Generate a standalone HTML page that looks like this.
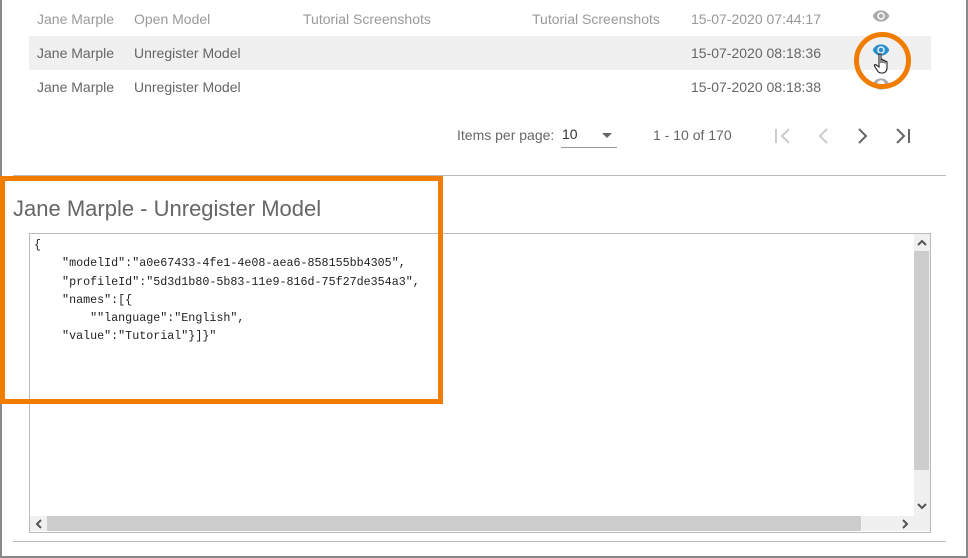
<!DOCTYPE html>
<html><head><style>
body{margin:0;width:968px;height:558px;position:relative;overflow:hidden;background:#fff;font-family:"Liberation Sans",Roboto,sans-serif;}
.a{position:absolute;white-space:nowrap}
.t{font-size:14px;color:#666}
.f{color:#999}
.mono{font-family:"Liberation Mono",monospace;font-size:11.7px;color:#222;line-height:18.3px}
</style></head><body>
<div class="a" style="left:0;top:0;width:2px;height:558px;background:#888"></div>
<div class="a" style="left:966px;top:0;width:2px;height:558px;background:#888"></div>
<div class="a" style="left:0;top:556px;width:968px;height:2px;background:#888"></div>

<div class="a" style="left:29px;top:36px;width:902px;height:34px;background:#f0f0f0"></div>
<div class="a t f" style="left:37px;top:11px">Jane Marple</div>
<div class="a t f" style="left:134px;top:11px">Open Model</div>
<div class="a t f" style="left:303px;top:11px">Tutorial Screenshots</div>
<div class="a t f" style="left:532px;top:11px">Tutorial Screenshots</div>
<div class="a t f" style="left:691px;top:11px">15-07-2020 07:44:17</div>
<div class="a t" style="left:37px;top:45px">Jane Marple</div>
<div class="a t" style="left:134px;top:45px">Unregister Model</div>
<div class="a t" style="left:691px;top:45px">15-07-2020 08:18:36</div>
<div class="a t" style="left:37px;top:79px">Jane Marple</div>
<div class="a t" style="left:134px;top:79px">Unregister Model</div>
<div class="a t" style="left:691px;top:79px">15-07-2020 08:18:38</div>

<svg class="a" style="left:870px;top:7px" width="22" height="18" viewBox="0 0 24 24"><path fill="#aaa" d="M12 4.5C7 4.5 2.7 7.6 1 12c1.7 4.4 6 7.5 11 7.5s9.3-3.1 11-7.5C21.3 7.6 17 4.5 12 4.5zm0 12.5a5 5 0 1 1 0-10 5 5 0 0 1 0 10zm0-8a3 3 0 1 0 0 6 3 3 0 0 0 0-6z"/></svg>
<svg class="a" style="left:870px;top:41px" width="22" height="18" viewBox="0 0 24 24"><path fill="#2a8fcf" d="M12 4.5C7 4.5 2.7 7.6 1 12c1.7 4.4 6 7.5 11 7.5s9.3-3.1 11-7.5C21.3 7.6 17 4.5 12 4.5zm0 12.5a5 5 0 1 1 0-10 5 5 0 0 1 0 10zm0-8a3 3 0 1 0 0 6 3 3 0 0 0 0-6z"/></svg>
<svg class="a" style="left:870px;top:75px" width="22" height="18" viewBox="0 0 24 24"><path fill="#aaa" d="M12 4.5C7 4.5 2.7 7.6 1 12c1.7 4.4 6 7.5 11 7.5s9.3-3.1 11-7.5C21.3 7.6 17 4.5 12 4.5zm0 12.5a5 5 0 1 1 0-10 5 5 0 0 1 0 10z"/></svg>
<div class="a" style="left:854px;top:32px;width:47px;height:47px;border:5px solid #f07d00;border-radius:50%;background:transparent"></div>
<svg class="a" style="left:873px;top:52px" width="22" height="24" viewBox="0 0 22 24"><path d="M6 2.5c0-1 2-1 2 0V11V8c0-1 2-1 2 0v3V9c0-1 2-1 2 0v2.5V10c0-1 2-1 2 0v6c0 3-2 5-4.5 5H8c-2 0-3-1-4-3l-2.5-4c-.5-1 .8-2 1.6-1L6 15z" fill="#fff" stroke="#222" stroke-width="1.1"/></svg>

<div class="a" style="left:457px;top:127px;font-size:14px;color:#666">Items per page:</div>
<div class="a" style="left:562px;top:126px;font-size:14px;color:#333">10</div>
<div class="a" style="left:602px;top:133px;width:0;height:0;border-left:5px solid transparent;border-right:5px solid transparent;border-top:5px solid #666"></div>
<div class="a" style="left:561px;top:147px;width:56px;height:1px;background:#999"></div>
<div class="a" style="left:653px;top:127px;font-size:14px;color:#666">1 - 10 of 170</div>
<svg class="a" style="left:770px;top:125px" width="150" height="22" viewBox="0 0 150 22">
<g fill="none" stroke-width="2">
<path d="M6 4v14M19 4l-7 7 7 7" stroke="#ccc"/>
<path d="M57 4l-7 7 7 7" stroke="#ccc"/>
<path d="M89 4l7 7-7 7" stroke="#666"/>
<path d="M127 4l7 7-7 7M139 4v14" stroke="#666"/>
</g></svg>

<div class="a" style="left:13px;top:175px;width:933px;height:1px;background:#bbb"></div>
<div class="a" style="left:13px;top:196px;font-size:22px;color:#666">Jane Marple - Unregister Model</div>

<div class="a" style="left:29px;top:233px;width:900px;height:298px;border:1px solid #bbb;background:#fff"></div>
<div class="a mono" style="left:34px;top:236px">{<br>&nbsp;&nbsp;&nbsp;&nbsp;"modelId":"a0e67433-4fe1-4e08-aea6-858155bb4305",<br>&nbsp;&nbsp;&nbsp;&nbsp;"profileId":"5d3d1b80-5b83-11e9-816d-75f27de354a3",<br>&nbsp;&nbsp;&nbsp;&nbsp;"names":[{<br>&nbsp;&nbsp;&nbsp;&nbsp;&nbsp;&nbsp;&nbsp;&nbsp;""language":"English",<br>&nbsp;&nbsp;&nbsp;&nbsp;"value":"Tutorial"}]}"</div>
<div class="a" style="left:914px;top:234px;width:16px;height:282px;background:#f0f0f0"></div>
<div class="a" style="left:914px;top:251px;width:15px;height:219px;background:#cdcdcd"></div>
<svg class="a" style="left:917px;top:239px" width="10" height="8"><path d="M1 6l4-4 4 4" fill="none" stroke="#555" stroke-width="2"/></svg>
<svg class="a" style="left:917px;top:502px" width="10" height="8"><path d="M1 2l4 4 4-4" fill="none" stroke="#555" stroke-width="2"/></svg>
<div class="a" style="left:30px;top:516px;width:884px;height:15px;background:#f0f0f0"></div>
<div class="a" style="left:47px;top:516px;width:814px;height:15px;background:#cdcdcd"></div>
<svg class="a" style="left:35px;top:519px" width="8" height="10"><path d="M6 1L2 5l4 4" fill="none" stroke="#555" stroke-width="2"/></svg>
<svg class="a" style="left:901px;top:519px" width="8" height="10"><path d="M2 1l4 4-4 4" fill="none" stroke="#555" stroke-width="2"/></svg>
<div class="a" style="left:914px;top:516px;width:16px;height:15px;background:#f0f0f0"></div>

<div class="a" style="left:13px;top:541px;width:933px;height:1px;background:#bbb"></div>

<div class="a" style="left:0;top:176px;width:433px;height:218px;border:5px solid #f07d00"></div>
</body></html>
